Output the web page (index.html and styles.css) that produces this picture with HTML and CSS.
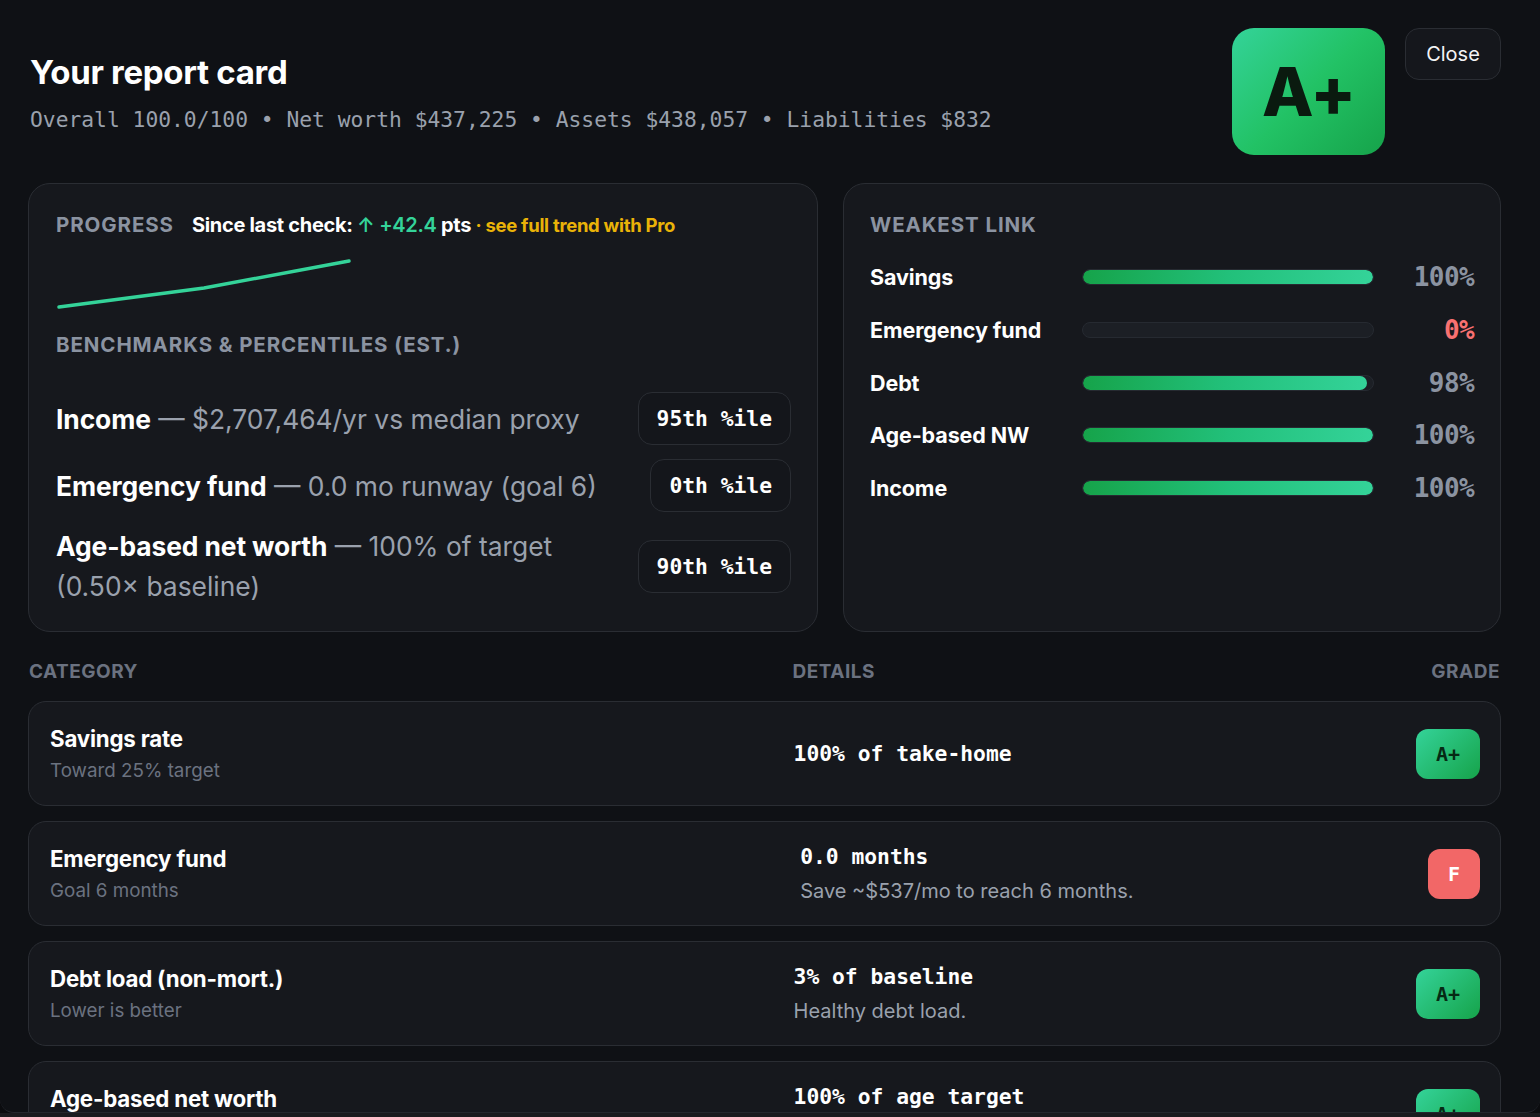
FILE: index.html
```html
<!DOCTYPE html>
<html lang="en">
<head>
<meta charset="utf-8">
<title>Your report card</title>
<link rel="stylesheet" href="styles.css">
</head>
<body>
<div class="modal">
  <header class="top">
    <div class="intro">
      <h1 class="title">Your report card</h1>
      <p class="summary">Overall 100.0/100 • Net worth $437,225 • Assets $438,057 • Liabilities $832</p>
    </div>
    <div class="top-actions">
      <div class="big-grade">A+</div>
      <button class="close-btn">Close</button>
    </div>
  </header>

  <section class="panels">
    <div class="card left-card">
      <div class="progress-head">
        <span class="label">PROGRESS</span>
        <span class="since">Since last check: <span class="up">↑ +42.4</span> pts <span class="pro">· see full trend with Pro</span></span>
      </div>
      <svg class="spark" width="300" height="60" viewBox="0 0 300 60">
        <polyline points="3,52 148,33 293,6" fill="none" stroke="#34d399" stroke-width="3.5" stroke-linecap="round" stroke-linejoin="round"/>
      </svg>
      <div class="label bench-label">BENCHMARKS &amp; PERCENTILES (EST.)</div>
      <div class="bench-list">
        <div class="bench-row">
          <div class="bench-text"><b>Income</b> — $2,707,464/yr vs median proxy</div>
          <div class="pill">95th %ile</div>
        </div>
        <div class="bench-row">
          <div class="bench-text"><b>Emergency fund</b> — 0.0 mo runway (goal 6)</div>
          <div class="pill">0th %ile</div>
        </div>
        <div class="bench-row">
          <div class="bench-text"><b>Age-based net worth</b> — 100% of target<br>(0.50× baseline)</div>
          <div class="pill">90th %ile</div>
        </div>
      </div>
    </div>

    <div class="card right-card">
      <div class="label">WEAKEST LINK</div>
      <div class="links">
        <div class="link-name">Savings</div>
        <div class="track"><div class="fill" style="width:100%"></div></div>
        <div class="pct">100%</div>

        <div class="link-name">Emergency fund</div>
        <div class="track"><div class="fill" style="width:0%"></div></div>
        <div class="pct bad">0%</div>

        <div class="link-name">Debt</div>
        <div class="track"><div class="fill" style="width:98%"></div></div>
        <div class="pct">98%</div>

        <div class="link-name">Age-based NW</div>
        <div class="track"><div class="fill" style="width:100%"></div></div>
        <div class="pct">100%</div>

        <div class="link-name">Income</div>
        <div class="track"><div class="fill" style="width:100%"></div></div>
        <div class="pct">100%</div>
      </div>
    </div>
  </section>

  <div class="table-head">
    <span>CATEGORY</span>
    <span>DETAILS</span>
    <span class="th-grade">GRADE</span>
  </div>

  <div class="rows">
    <div class="row">
      <div class="cat">
        <div class="cat-title">Savings rate</div>
        <div class="cat-sub">Toward 25% target</div>
      </div>
      <div class="det">
        <div class="det-main">100% of take-home</div>
      </div>
      <div class="grade good">A+</div>
    </div>
    <div class="row">
      <div class="cat">
        <div class="cat-title">Emergency fund</div>
        <div class="cat-sub">Goal 6 months</div>
      </div>
      <div class="det">
        <div class="det-main">0.0 months</div>
        <div class="det-sub">Save ~$537/mo to reach 6 months.</div>
      </div>
      <div class="grade fail">F</div>
    </div>
    <div class="row">
      <div class="cat">
        <div class="cat-title">Debt load (non-mort.)</div>
        <div class="cat-sub">Lower is better</div>
      </div>
      <div class="det">
        <div class="det-main">3% of baseline</div>
        <div class="det-sub">Healthy debt load.</div>
      </div>
      <div class="grade good">A+</div>
    </div>
    <div class="row">
      <div class="cat">
        <div class="cat-title">Age-based net worth</div>
        <div class="cat-sub">On track for your age</div>
      </div>
      <div class="det">
        <div class="det-main">100% of age target</div>
        <div class="det-sub">Keep compounding.</div>
      </div>
      <div class="grade good">A+</div>
    </div>
  </div>
</div>
<div class="backdrop-strip"></div>
</body>
</html>
```

FILE: styles.css
```css
* { box-sizing: border-box; }

html, body {
  margin: 0;
  padding: 0;
  background: #0b0c0f;
  font-family: "Inter", "Noto Sans", sans-serif;
  color: #f3f4f6;
}

body { height: 1117px; overflow: hidden; }

.modal {
  width: 1540px;
  height: 1113px;
  overflow: hidden;
  background: #0f1115;
  border-bottom: 1px solid #24272d;
  border-radius: 0 0 14px 14px;
  padding: 28px 39px 0 28px;
}

.backdrop-strip {
  height: 4px;
  background: #1a1b1e;
}

/* header */
.top {
  display: flex;
  justify-content: space-between;
  align-items: flex-start;
}

.intro { padding-left: 2px; }

.title {
  margin: 24px 0 0;
  font-size: 33px;
  line-height: 40px;
  font-weight: 700;
  letter-spacing: -0.3px;
  color: #ffffff;
}

.summary {
  margin: 14px 0 0;
  font-family: "DejaVu Sans Mono", "Liberation Mono", monospace;
  font-size: 21.3px;
  line-height: 28px;
  color: #9aa1ad;
}

.top-actions {
  display: flex;
  gap: 20px;
  align-items: flex-start;
}

.big-grade {
  width: 153px;
  height: 127px;
  border-radius: 22px;
  background: linear-gradient(135deg, #34d399 0%, #22c265 50%, #16a34a 100%);
  display: flex;
  align-items: center;
  justify-content: center;
  font-size: 67px;
  font-weight: 800;
  color: #0a1a0f;
  letter-spacing: -1px;
}

.close-btn {
  width: 96px;
  height: 52px;
  border-radius: 14px;
  background: #15171c;
  border: 1px solid #2a2d33;
  color: #f3f4f6;
  font-family: "Inter", "Liberation Sans", sans-serif;
  font-size: 20px;
}

/* panels */
.panels {
  margin-top: 28px;
  display: grid;
  grid-template-columns: 790px 658px;
  gap: 25px;
}

.card {
  background: #16181d;
  border: 1px solid #2a2d33;
  border-radius: 22px;
}

.left-card { padding: 27px 26px 25px 27px; }
.right-card { padding: 27px 26px 20px 26px; }

.label {
  font-size: 20.5px;
  line-height: 28px;
  font-weight: 700;
  letter-spacing: 0.9px;
  color: #8b93a1;
}

.progress-head {
  display: flex;
  gap: 18px;
  align-items: baseline;
  line-height: 28px;
}

.since {
  font-size: 20px;
  font-weight: 700;
  color: #ffffff;
  letter-spacing: -0.3px;
}

.up { color: #34d399; font-weight: 600; }
.pro { color: #eab308; font-size: 18.5px; font-weight: 700; }

.spark {
  display: block;
  margin-top: 16px;
}

.bench-label { margin-top: 16px; }

.bench-list {
  margin-top: 33px;
  display: flex;
  flex-direction: column;
  gap: 14px;
}

.bench-row {
  display: flex;
  justify-content: space-between;
  align-items: center;
  gap: 30px;
}

.bench-text {
  font-size: 26.4px;
  line-height: 40px;
  color: #9aa1ad;
  font-weight: 400;
}

.bench-text b {
  color: #ffffff;
  font-weight: 700;
  letter-spacing: -0.1px;
}

.pill {
  flex: none;
  height: 53px;
  padding: 0 18px;
  border: 1px solid #2a2d33;
  border-radius: 14px;
  display: flex;
  align-items: center;
  font-family: "DejaVu Sans Mono", "Liberation Mono", monospace;
  font-weight: 700;
  font-size: 21.3px;
  color: #ffffff;
  background: #14161b;
}

/* weakest link */
.links {
  margin-top: 12px;
  display: grid;
  grid-template-columns: 212px 292px 1fr;
  grid-auto-rows: 52.7px;
  align-items: center;
}

.link-name {
  font-size: 21.5px;
  font-weight: 700;
  color: #ffffff;
  letter-spacing: -0.1px;
}

.track {
  height: 16px;
  background: #1c1f25;
  border: 1px solid #262a31;
  border-radius: 8px;
  overflow: hidden;
}

.fill {
  height: 100%;
  border-radius: 8px;
  background: linear-gradient(90deg, #16a34a 0%, #22c07a 50%, #34d399 100%);
}

.pct {
  justify-self: end;
  font-family: "DejaVu Sans Mono", "Liberation Mono", monospace;
  font-weight: 700;
  font-size: 26px;
  color: #8b93a1;
  letter-spacing: -0.6px;
}

.pct.bad { color: #f87171; }

/* table */
.table-head {
  margin-top: 29px;
  display: grid;
  grid-template-columns: 1.2fr 1fr auto;
  column-gap: 16px;
  padding: 0 1px;
  font-size: 19px;
  line-height: 22px;
  font-weight: 700;
  letter-spacing: 0.5px;
  color: #6b7280;
}

.th-grade { text-align: right; }

.rows {
  margin-top: 18px;
  display: flex;
  flex-direction: column;
  gap: 15px;
}

.row {
  height: 105px;
  flex: none;
  display: grid;
  grid-template-columns: 1.2fr 1fr auto;
  column-gap: 16px;
  align-items: center;
  padding: 0 20px 0 21px;
  background: #16181d;
  border: 1px solid #2a2d33;
  border-radius: 18px;
}

.cat-title {
  font-size: 22.3px;
  line-height: 28px;
  font-weight: 700;
  color: #ffffff;
  letter-spacing: -0.2px;
}

.cat-sub {
  margin-top: 6px;
  font-size: 18.8px;
  line-height: 24px;
  color: #6b7280;
}

.det-main {
  font-family: "DejaVu Sans Mono", "Liberation Mono", monospace;
  font-weight: 700;
  font-size: 21.3px;
  line-height: 28px;
  color: #ffffff;
}

.det-sub {
  margin-top: 6px;
  font-size: 20px;
  line-height: 28px;
  color: #9aa1ad;
}

.grade {
  height: 50px;
  padding: 0 20px;
  border-radius: 12px;
  display: flex;
  align-items: center;
  justify-content: center;
  font-family: "DejaVu Sans Mono", "Liberation Mono", monospace;
  font-weight: 700;
  font-size: 20px;
}

.grade.good {
  background: linear-gradient(135deg, #34d399 0%, #16a34a 100%);
  color: #062a14;
}

.grade.fail {
  background: #f26767;
  color: #ffffff;
}
```
